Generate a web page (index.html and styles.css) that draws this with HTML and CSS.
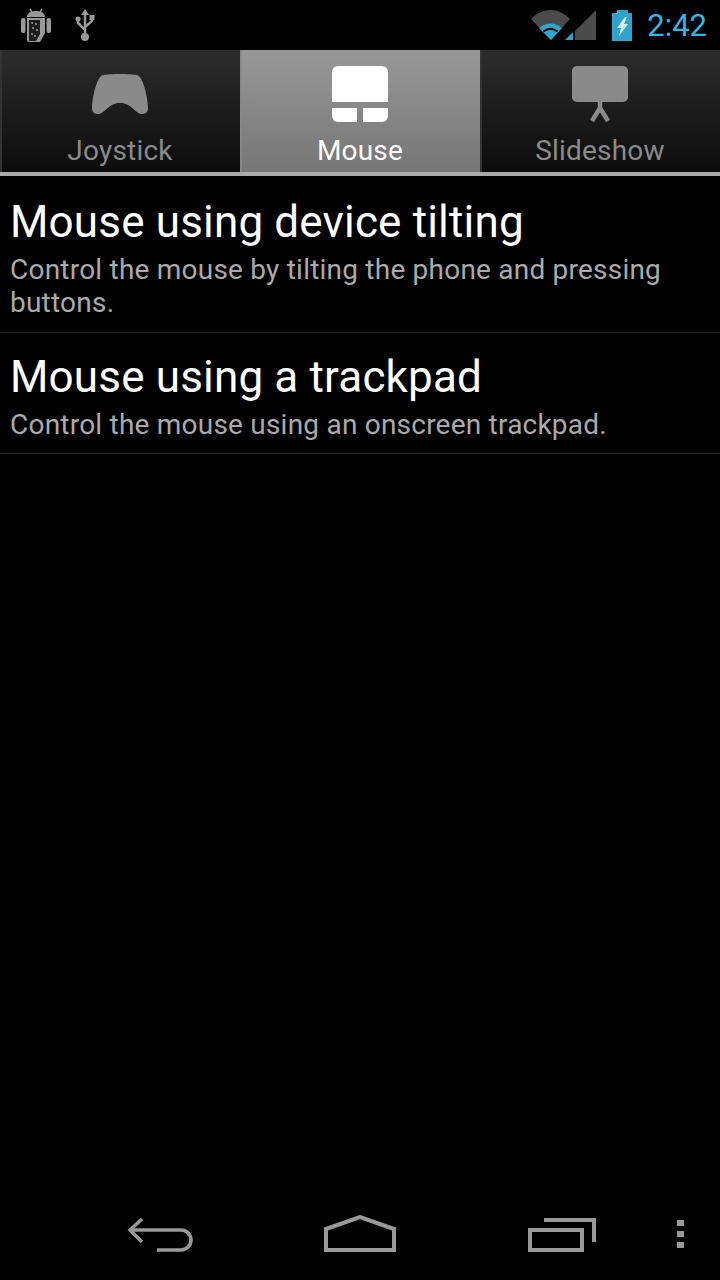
FILE: index.html
```html
<!DOCTYPE html>
<html lang="en">
<head>
  <meta charset="UTF-8">
  <meta name="viewport" content="width=device-width, initial-scale=1.0">
  <title>Mouse</title>
  <link rel="stylesheet" href="styles.css">
</head>
<body>
  <div class="phone">
    <div class="status-bar">
      <svg class="st-android" width="30" height="34" viewBox="0 0 30 34">
        <path d="M9 1l2 3M21 1l-2 3" stroke="#999" stroke-width="1.500" fill="none"/>
        <path class="grey" d="M6 9c0-4 4-6 9-6s9 2 9 6z"/>
        <rect class="grey" x="0" y="10" width="4.500" height="15" rx="2"/>
        <rect class="grey" x="25.500" y="10" width="4.500" height="15" rx="2"/>
        <path class="grey" d="M6 10h18v15l-5 9h-11a2 2 0 0 1-2-2z"/>
        <path d="M8 12h11v14l-4 7h-6a1 1 0 0 1-1-1z" fill="#1c1c1c"/>
        <path d="M10 14h2v2h-2zM14 15h2v2h-2zM11 19h2v2h-2zM15 21h2v2h-2zM10 25h2v2h-2zM13 27h2v2h-2z" fill="#777"/>
      </svg>
      <svg class="st-usb" width="22" height="33" viewBox="0 0 22 33">
        <circle cx="11" cy="28" r="4" fill="#999"/>
        <path d="M11 3v24M4 11v3l7 7M18 9v3l-7 6" stroke="#999" stroke-width="2.500" fill="none"/>
        <path d="M11 0l4 6h-8z" fill="#999"/>
        <circle cx="4" cy="10" r="2.500" fill="#999"/>
        <rect x="15.500" y="6" width="5" height="5" fill="#999"/>
      </svg>
      <div class="spacer"></div>
      <svg class="st-signal" width="65" height="30" viewBox="0 0 65 30">
        <path d="M0 9c12-12 27-12 39 0l-19 21z" fill="#4b4b4b"/>
        <path d="M8 18c7-6 16-6 23 0l-11 12z" fill="#2ea3cc"/>
        <path d="M12.500 21.500c5-4 9-4 14 0" stroke="#000" stroke-width="2" fill="none"/>
        <path d="M65 0v30h-21v-9z" fill="#4b4b4b"/>
        <path d="M42 22v8h-8z" fill="#2ea3cc"/>
      </svg>
      <svg class="st-battery" width="20" height="31" viewBox="0 0 20 31">
        <path d="M5 0h11v3h4v28h-20v-28h5z" fill="#2ea3cc"/>
        <path d="M13 7l-8 11h4l-2 8 9-12h-4l3-7z" fill="#d7f1fb"/>
      </svg>
      <span class="clock">2:42</span>
    </div>

    <div class="tabs">
      <div class="tab">
        <svg class="tab-icon" width="56" height="56" viewBox="0 0 56 56">
          <path d="M11 9c7-1.500 27-1.500 34 0 5 1 10 17 11 32 .5 5-2 7-6 7-7 0-10-11-22-11s-15 11-22 11c-4 0-6.500-2-6-7 1-15 6-31 11-32z" fill="#8a8a8a"/>
        </svg>
        <span class="tab-label">Joystick</span>
      </div>
      <div class="tab active">
        <svg class="tab-icon" width="56" height="56" viewBox="0 0 56 56">
          <path d="M6 0h44a6 6 0 0 1 6 6v30h-56v-30a6 6 0 0 1 6-6z" fill="#fff"/>
          <path d="M0 42h25v14h-19a6 6 0 0 1-6-6z" fill="#fff"/>
          <path d="M31 42h25v8a6 6 0 0 1-6 6h-19z" fill="#fff"/>
        </svg>
        <span class="tab-label">Mouse</span>
      </div>
      <div class="tab">
        <svg class="tab-icon" width="56" height="56" viewBox="0 0 56 56">
          <rect width="56" height="36" rx="5" fill="#8a8a8a"/>
          <path d="M28 36v6l-8 13M28 42l8 13" stroke="#8a8a8a" stroke-width="4.500" fill="none"/>
        </svg>
        <span class="tab-label">Slideshow</span>
      </div>
    </div>

    <div class="list">
      <div class="list-item">
        <div class="item-title">Mouse using device tilting</div>
        <div class="item-sub">Control the mouse by tilting the phone and pressing buttons.</div>
      </div>
      <div class="list-item">
        <div class="item-title">Mouse using a trackpad</div>
        <div class="item-sub">Control the mouse using an onscreen trackpad.</div>
      </div>
    </div>

    <div class="nav-bar">
      <svg class="nav-back" width="66" height="34" viewBox="0 0 66 34">
        <path d="M15 1l-12 11 12 12M3 12h51a10 10 0 0 1 0 20h-24" stroke="#999" stroke-width="3.500" fill="none"/>
      </svg>
      <svg class="nav-home" width="72" height="38" viewBox="0 0 72 38">
        <path d="M2 14l34-12 34 12v21h-68z" stroke="#999" stroke-width="4" fill="none"/>
      </svg>
      <svg class="nav-recent" width="68" height="34" viewBox="0 0 68 34">
        <path d="M16 2h50v22" stroke="#999" stroke-width="4" fill="none"/>
        <rect x="2" y="12" width="52" height="20" stroke="#999" stroke-width="4" fill="none"/>
      </svg>
      <div class="nav-menu">
        <span></span><span></span><span></span>
      </div>
    </div>
  </div>
</body>
</html>
```

FILE: styles.css
```css
* {
  box-sizing: border-box;
}
body {
  margin: 0;
  background: #000;
  font-family: Roboto, "Liberation Sans", sans-serif;
  color: #fff;
}
.phone {
  width: 720px;
  height: 1280px;
  display: flex;
  flex-direction: column;
  overflow: hidden;
}
.grey {
  fill: #999;
}
.status-bar {
  height: 50px;
  flex: none;
  display: flex;
  align-items: center;
  padding: 0 13px 0 21px;
}
.status-bar svg {
  display: block;
}
.st-usb {
  margin-left: 23px;
}
.spacer {
  flex: 1;
}
.st-battery {
  margin-left: 16px;
}
.clock {
  margin-left: 15px;
  color: #33b5e5;
  font-size: 31px;
}
.tabs {
  height: 126px;
  flex: none;
  display: flex;
  background: #000;
}
.tab {
  width: 240px;
  display: flex;
  flex-direction: column;
  align-items: center;
  padding-top: 16px;
  background: linear-gradient(#2c2c2c, #0c0c0c);
  box-shadow: inset 2px 0 0 #333;
  border-bottom: 4px solid #aaa;
  color: #8a8a8a;
}
.tab.active {
  background: linear-gradient(#989898, #767676);
  box-shadow: inset 2px 0 0 #888;
  color: #fff;
}
.tab-icon {
  display: block;
}
.tab-label {
  font-size: 28px;
  line-height: 34px;
  margin-top: 12px;
  letter-spacing: 0.2px;
}
.list-item {
  padding: 22px 10px 13px;
  border-bottom: 1px solid #2a2a2a;
}
.list-item + .list-item {
  padding: 20px 10px 12px;
}
.item-title {
  font-size: 44px;
  line-height: 48px;
  letter-spacing: 0.17px;
}
.item-sub {
  font-size: 28px;
  line-height: 33px;
  letter-spacing: 0.22px;
  color: #aaa;
  margin-top: 7px;
}
.nav-bar {
  margin-top: auto;
  height: 96px;
  flex: none;
  position: relative;
  display: flex;
  align-items: flex-start;
  padding: 34px 0 0 127px;
}
.nav-bar svg {
  display: block;
}
.nav-home {
  margin: -3px 0 0 131px;
}
.nav-recent {
  margin-left: 132px;
}
.nav-menu {
  position: absolute;
  left: 677px;
  top: 36px;
  display: flex;
  flex-direction: column;
  gap: 5px;
}
.nav-menu span {
  width: 7px;
  height: 6px;
  background: #999;
}
```
